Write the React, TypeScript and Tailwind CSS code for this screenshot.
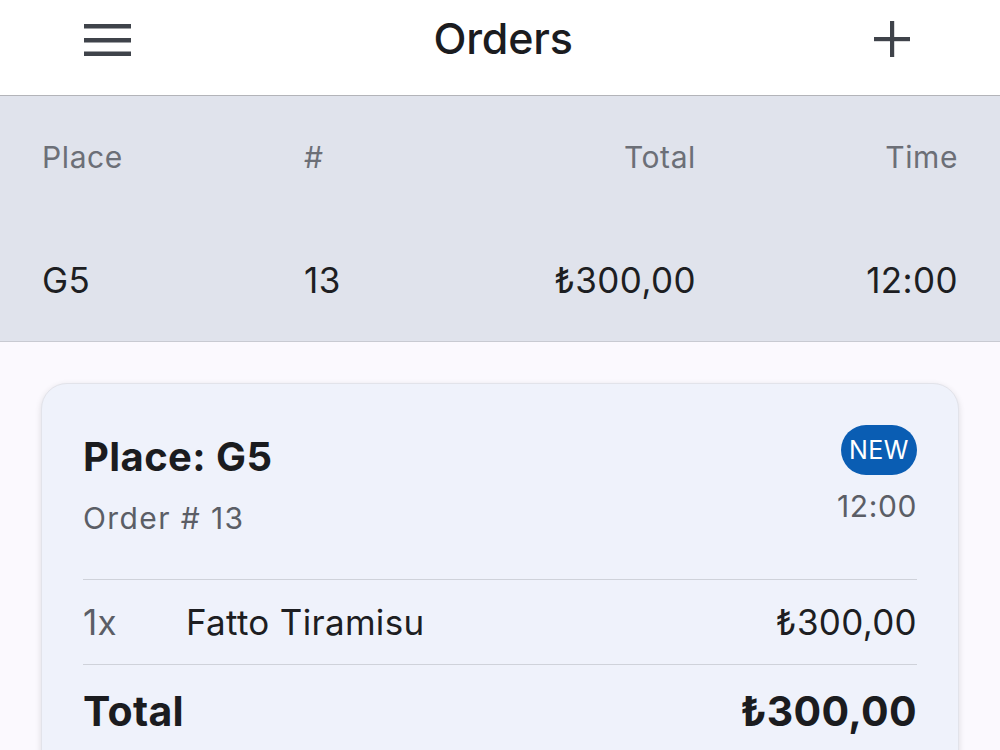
const font = { fontFamily: 'Inter, "Noto Sans", "DejaVu Sans", sans-serif' };

function MenuIcon() {
  return (
    <svg width="48" height="36" viewBox="0 0 48 36" className="text-[#3f434a]">
      <rect x="0" y="3" width="47" height="4.5" fill="currentColor" />
      <rect x="0" y="17" width="47" height="4.5" fill="currentColor" />
      <rect x="0" y="30.5" width="47" height="4.5" fill="currentColor" />
    </svg>
  );
}

function PlusIcon() {
  return (
    <svg width="36" height="36" viewBox="0 0 36 36" className="text-[#3f434a]">
      <rect x="16" y="0" width="4.2" height="36" fill="currentColor" />
      <rect x="0" y="16" width="36" height="4.2" fill="currentColor" />
    </svg>
  );
}

export default function App() {
  return (
    <div
      className="w-[1000px] h-[750px] overflow-hidden bg-[#fbf9fe] flex flex-col"
      style={font}
    >
      {/* Top bar */}
      <header className="h-[96px] shrink-0 bg-white border-b border-[#b3b4b9] flex items-center justify-between pl-[84px] pr-[90px] pb-[18px]">
        <MenuIcon />
        <h1 className="text-[43px] font-medium text-[#1b1c1f] tracking-[-0.2px]">Orders</h1>
        <PlusIcon />
      </header>

      {/* Summary table */}
      <section className="shrink-0 bg-[#e0e3ec] border-b border-[#c8cad2] px-[42px]">
        <div className="grid grid-cols-[262px_1fr_1fr_262px] h-[123px] items-center text-[30px] tracking-[0.6px] text-[#6c6f77]">
          <span>Place</span>
          <span>#</span>
          <span className="text-right">Total</span>
          <span className="text-right">Time</span>
        </div>
        <div className="grid grid-cols-[262px_1fr_1fr_262px] h-[122px] items-center text-[35px] tracking-[0.4px] text-[#1d1e22]">
          <span>G5</span>
          <span>13</span>
          <span className="text-right">₺300,00</span>
          <span className="text-right">12:00</span>
        </div>
      </section>

      {/* Order card */}
      <main className="px-[41px] pt-[41px]">
        <div className="rounded-[26px] bg-[#eff2fb] border border-[#e2e3ea] shadow-[0_2px_6px_rgba(0,0,0,0.12)] px-[41px] pt-[41px] pb-10">
          <div className="flex items-start justify-between">
            <div>
              <h2 className="mt-[8px] text-[40px] font-bold text-[#1b1c1f] leading-[48px] tracking-[0.4px]">Place: G5</h2>
              <p className="mt-[19px] text-[30px] text-[#5b5e66] tracking-[1.4px] leading-[36px]">Order # 13</p>
            </div>
            <div className="flex flex-col items-end">
              <span className="rounded-full bg-[#0a5db3] text-white text-[25px] tracking-[0.5px] leading-[50px] h-[50px] px-[8px]">NEW</span>
              <span className="mt-[13px] text-[30px] text-[#5b5e66] leading-[36px] tracking-[0.6px]">12:00</span>
            </div>
          </div>

          <div className="mt-[43px] border-t border-[#cfd2da] h-[85px] flex items-center text-[35px] tracking-[0.3px]">
            <span className="w-[103px] text-[#5b5e66]">1x</span>
            <span className="flex-1 text-[#1d1e22]">Fatto Tiramisu</span>
            <span className="text-[#1d1e22]">₺300,00</span>
          </div>

          <div className="border-t border-[#cfd2da] h-[94px] flex items-center justify-between text-[41px] font-bold tracking-[0.3px] text-[#1b1c1f]">
            <span>Total</span>
            <span>₺300,00</span>
          </div>
        </div>
      </main>
    </div>
  );
}
